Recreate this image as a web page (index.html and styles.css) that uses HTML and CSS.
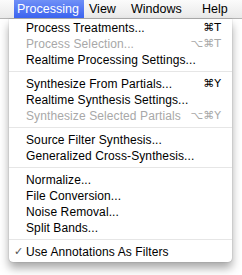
FILE: index.html
```html
<!DOCTYPE html>
<html>
<head>
    <title>Processing menu</title>
    <link rel="stylesheet" href="styles.css">
</head>
<body>
    <div class="menubar">
        <div class="menubar-item active">Processing</div>
        <div class="menubar-item">View</div>
        <div class="menubar-item">Windows</div>
        <div class="menubar-item">Help</div>
    </div>

    <div class="menu">
        <div class="item"><span>Process Treatments...</span><span class="key">&#8984;T</span></div>
        <div class="item disabled"><span>Process Selection...</span><span class="key">&#8997;&#8984;T</span></div>
        <div class="item"><span>Realtime Processing Settings...</span></div>
        <div class="sep"></div>
        <div class="item"><span>Synthesize From Partials...</span><span class="key">&#8984;Y</span></div>
        <div class="item"><span>Realtime Synthesis Settings...</span></div>
        <div class="item disabled"><span>Synthesize Selected Partials</span><span class="key">&#8997;&#8984;Y</span></div>
        <div class="sep"></div>
        <div class="item"><span>Source Filter Synthesis...</span></div>
        <div class="item"><span>Generalized Cross-Synthesis...</span></div>
        <div class="sep"></div>
        <div class="item"><span>Normalize...</span></div>
        <div class="item"><span>File Conversion...</span></div>
        <div class="item"><span>Noise Removal...</span></div>
        <div class="item"><span>Split Bands...</span></div>
        <div class="sep"></div>
        <div class="item checked"><span>Use Annotations As Filters</span></div>
    </div>
</body>
</html>
```

FILE: styles.css
```css
body {
    margin: 0;
    width: 242px;
    height: 275px;
    background: #ffffff;
    font-family: "Liberation Sans", Arial, sans-serif;
    font-size: 12px;
    color: #000;
    overflow: hidden;
}
.menubar {
    display: flex;
    height: 19px;
    padding-left: 14px;
    background: linear-gradient(#fbfbfb, #e9e9e9);
    border-bottom: 1px solid #b4b4b4;
    box-sizing: border-box;
    white-space: nowrap;
}
.menubar-item {
    padding: 0 0 0 3px;
    line-height: 18px;
    font-size: 12.5px;
}
.menubar-item:nth-child(1) { width: 67px; }
.menubar-item:nth-child(2) { width: 33px; padding-left: 5px; }
.menubar-item:nth-child(3) { width: 62px; padding-left: 9px; }
.menubar-item:nth-child(4) { padding-left: 9px; }
.menubar-item.active {
    color: #fff;
    background: linear-gradient(#6f90f7, #3b63ef);
}
.menu {
    margin-left: 9px;
    width: 223px;
    padding: 1px 0 2px;
    background: #fff;
    box-shadow: 0 6px 10px rgba(0,0,0,0.35), 0 0 1px rgba(0,0,0,0.45);
    border-radius: 0 0 4px 4px;
}
.item {
    display: flex;
    justify-content: space-between;
    height: 16px;
    line-height: 16px;
    padding: 0 11px 0 17px;
    white-space: nowrap;
    letter-spacing: 0.1px;
}
.item.disabled {
    color: #a8a8a8;
}
.item.checked {
    position: relative;
}
.item.checked::before {
    content: "\2713";
    position: absolute;
    left: 5px;
    font-family: "DejaVu Sans", sans-serif;
    font-size: 11px;
    color: #555;
}
.key {
    font-family: "DejaVu Sans", sans-serif;
    font-size: 11px;
    letter-spacing: 0;
}
.sep {
    height: 1px;
    margin: 3px 0 4px;
    background: #e6e6e6;
}
```
